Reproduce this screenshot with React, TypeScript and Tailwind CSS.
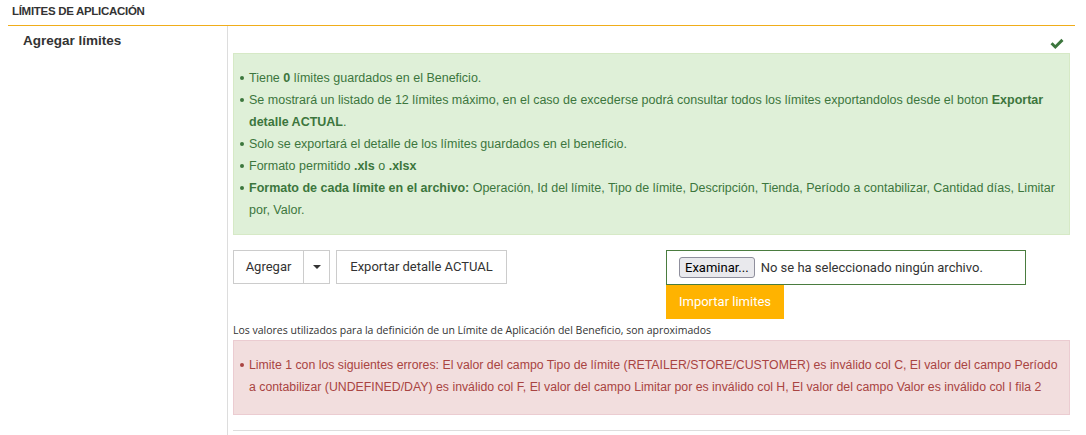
import React from "react";

const arial = { fontFamily: '"Liberation Sans", Arial, sans-serif' };

const Bullet = () => (
  <span className="mt-[9px] mr-[5px] h-[4px] w-[4px] shrink-0 rounded-full bg-current" />
);

const infoItems: React.ReactNode[] = [
  <>
    Tiene <b>0</b> límites guardados en el Beneficio.
  </>,
  <>
    Se mostrará un listado de 12 límites máximo, en el caso de excederse podrá consultar todos los
    límites exportandolos desde el boton <b>Exportar detalle ACTUAL</b>.
  </>,
  <>Solo se exportará el detalle de los límites guardados en el beneficio.</>,
  <>
    Formato permitido <b>.xls</b> o <b>.xlsx</b>
  </>,
  <>
    <b>Formato de cada límite en el archivo:</b> Operación, Id del límite, Tipo de límite,
    Descripción, Tienda, Período a contabilizar, Cantidad días, Limitar por, Valor.
  </>,
];

export default function App() {
  return (
    <div className="h-[435px] w-[1086px] overflow-hidden bg-white text-[#333]" style={arial}>
      <div className="ml-2 mr-[11px]">
        <div className="h-[26px] border-b border-[#f0ad1a] pl-1 pt-[3px] leading-[14px]">
          <span className="text-[11.5px] font-bold uppercase tracking-[-0.3px] text-[#333]">
            Límites de aplicación
          </span>
        </div>

        <div className="flex">
          <div className="w-[220px] shrink-0 border-r border-[#ddd] pl-[15px] pt-[5px]">
            <h3 className="text-[13.5px] font-bold text-[#333]">Agregar límites</h3>
          </div>

          <div className="flex-1 pl-[5px] pr-[5px]">
            <div className="flex h-[27px] items-end justify-end pb-[3px] pr-[6px]">
              <svg width="14" height="12" viewBox="0 0 14 12" className="fill-[#3c763d]">
                <path d="M0.5 6.3 L2.6 4.2 L5.3 6.9 L11.4 0.8 L13.5 2.9 L5.3 11.1 Z" />
              </svg>
            </div>

            <div className="border border-[#d6e9c6] bg-[#dff0d8] pb-[13px] pl-[6px] pr-[8px] pt-[13px] text-[12.5px] leading-[22px] text-[#3c763d]">
              <ul>
                {infoItems.map((item, i) => (
                  <li key={i} className="flex">
                    <Bullet />
                    <span>{item}</span>
                  </li>
                ))}
              </ul>
            </div>

            <div className="mt-[15px] flex">
              <div className="w-[433px] shrink-0">
                <div className="flex gap-[6px]" style={{ fontFamily: "Roboto, sans-serif" }}>
                  <div className="flex h-[34px] border border-[#ccc] text-[13px] text-[#333]">
                    <button className="w-[70px] border-r border-[#ccc]">Agregar</button>
                    <button className="flex w-[25px] items-center justify-center">
                      <span className="border-x-[4px] border-t-[4px] border-x-transparent border-t-[#333]" />
                    </button>
                  </div>
                  <button className="h-[34px] w-[171px] border border-[#ccc] text-[13px] text-[#333]">
                    Exportar detalle ACTUAL
                  </button>
                </div>
              </div>

              <div style={{ fontFamily: "Roboto, sans-serif" }}>
                <div className="flex h-[35px] w-[360px] items-center border border-[#4a7c3f] pl-3">
                  <span className="flex h-[21px] items-center rounded-[3px] border border-[#8f8f9d] bg-[#e9e9ed] px-[5px] text-[13px] text-black">
                    Examinar...
                  </span>
                  <span className="ml-[6px] text-[13px] text-[#333]">
                    No se ha seleccionado ningún archivo.
                  </span>
                </div>
                <button className="h-[34px] w-[118px] bg-[#ffb300] text-[13px] text-white">
                  Importar limites
                </button>
              </div>
            </div>

            <p
              className="mt-[2px] h-[19px] text-[10.5px] leading-[19px] text-[#333]"
              style={{ fontFamily: '"Open Sans", sans-serif' }}
            >
              Los valores utilizados para la definición de un Límite de Aplicación del Beneficio, son
              aproximados
            </p>

            <div className="border border-[#ebccd1] bg-[#f2dede] pb-[16px] pl-[6px] pr-[6px] pt-[13px] text-[12.3px] leading-[22px] text-[#a94442]">
              <ul>
                <li className="flex">
                  <Bullet />
                  <span>
                    Limite 1 con los siguientes errores: El valor del campo Tipo de límite
                    (RETAILER/STORE/CUSTOMER) es inválido col C, El valor del campo Período a
                    contabilizar (UNDEFINED/DAY) es inválido col F, El valor del campo Limitar por es
                    inválido col H, El valor del campo Valor es inválido col I fila 2
                  </span>
                </li>
              </ul>
            </div>

            <div className="mt-[15px] border-t border-[#ddd] pb-10" />
          </div>
        </div>
      </div>
    </div>
  );
}
